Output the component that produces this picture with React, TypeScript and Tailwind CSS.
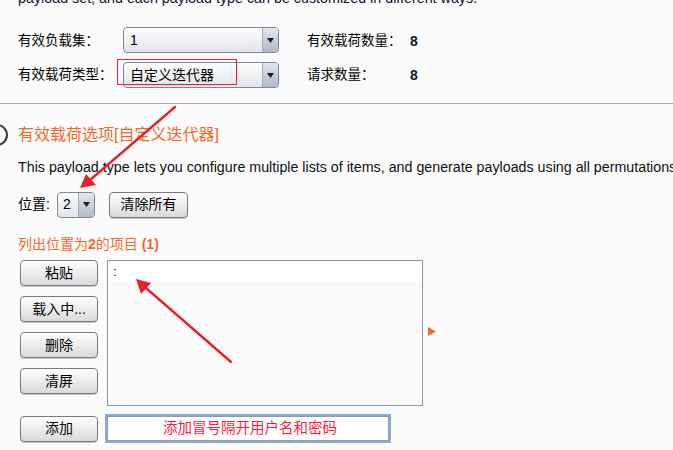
import React from "react";

const FONT = { fontFamily: '"Liberation Sans", Arial, "Noto Sans CJK SC", sans-serif' };

function Select({ value, width, narrow }: { value: string; width: string; narrow?: boolean }) {
  return (
    <div
      className={`${width} h-[26px] flex rounded-[4px] border border-[#7d8796] bg-gradient-to-b from-[#fefefe] to-[#e1e4ea] overflow-hidden`}
    >
      <div className={`flex-1 flex items-center ${narrow ? "pl-[5px]" : "pl-[6px]"} text-[14px] text-black`}>{value}</div>
      <div className="w-[16px] flex items-center justify-center border-l border-[#a3adb9] bg-gradient-to-b from-[#e3e8ee] to-[#aebbc9]">
        <svg width="7" height="5" viewBox="0 0 7 5">
          <path d="M0 0 L7 0 L3.5 5 Z" fill="#1a1a1a" />
        </svg>
      </div>
    </div>
  );
}

function Btn({ label, w = "w-[78px]" }: { label: string; w?: string }) {
  return (
    <div
      className={`${w} h-[26px] flex items-center justify-center rounded-[4px] border border-[#7b7b7b] bg-gradient-to-b from-[#ffffff] to-[#dadbdd] text-[14px] text-black shadow-[0_1px_0_#c8c8c8]`}
    >
      {label}
    </div>
  );
}

export default function App() {
  return (
    <div className="relative w-[673px] h-[450px] overflow-hidden bg-[#fbfbfb] text-[13px] text-black" style={FONT}>
      <div className="pl-[18px] -mt-[9px] h-[15px] leading-[15px] text-[14.3px] text-[#111133] whitespace-nowrap">
        payload set, and each payload type can be customized in different ways.
      </div>

      {/* rows */}
      <div className="mt-[21px] flex flex-col gap-[9px]">
        <div className="flex items-center h-[26px]">
          <div className="w-[123px] pl-[18px] text-[13.5px] pt-[2px]">有效负载集：</div>
          <Select value="1" width="w-[156px]" />
          <div className="w-[131px] pl-[28px] text-[13.5px] pt-[2px] whitespace-nowrap">有效载荷数量：</div>
          <div className="text-[14px] font-semibold text-[#111133] pt-[2px]">8</div>
        </div>
        <div className="flex items-center h-[26px]">
          <div className="w-[123px] pl-[18px] text-[13.5px] pt-[1px]">有效载荷类型：</div>
          <Select value="自定义迭代器" width="w-[156px]" />
          <div className="w-[131px] pl-[28px] text-[13.5px] pt-[1px] whitespace-nowrap">请求数量：</div>
          <div className="text-[14px] font-semibold text-[#111133] pt-[1px]">8</div>
        </div>
      </div>

      <div className="mt-[15px] h-px bg-[#a4a8b0]" />

      {/* section title */}
      <div className="mt-[20px] flex items-center h-[22px]">
        <div className="-ml-[14px] w-[22px] h-[22px] rounded-full border-2 border-[#3a3a3a]" />
        <div className="ml-[10px] text-[16px] text-[#f2692c] whitespace-nowrap">有效载荷选项[自定义迭代器]</div>
      </div>

      <div className="mt-[13px] pl-[18px] h-[16px] leading-[16px] text-[14.25px] text-[#111] whitespace-nowrap">
        This payload type lets you configure multiple lists of items, and generate payloads using all permutations
      </div>

      <div className="mt-[16px] pl-[18px] flex items-center h-[27px]">
        <div className="w-[39px] text-[14px]">位置:</div>
        <Select value="2" width="w-[38px]" narrow />
        <div className="ml-[14px]">
          <Btn label="清除所有" w="w-[79px]" />
        </div>
      </div>

      <div className="mt-[17px] pl-[18px] h-[18px] leading-[18px] text-[14px] text-[#f2692c]">
        列出位置为<span className="font-bold">2</span>的项目 <span className="font-bold">(1)</span>
      </div>

      <div className="mt-[7px] pl-[20px] flex">
        <div className="flex flex-col gap-[10px] w-[79px]">
          <Btn label="粘贴" />
          <Btn label="载入中..." />
          <Btn label="删除" />
          <Btn label="清屏" />
        </div>
        <div className="ml-[8px] w-[316px] h-[146px] border border-[#8d97a5] bg-[#fafafa]">
          <div className="h-[21px] bg-white pl-[5px] text-[13px] leading-[21px]">:</div>
        </div>
        <div className="ml-[5px] mt-[67px]">
          <svg width="8" height="9" viewBox="0 0 8 9">
            <path d="M0 0 L8 4.5 L0 9 Z" fill="#f2692c" />
          </svg>
        </div>
      </div>

      <div className="mt-[8px] pl-[20px] flex items-center">
        <Btn label="添加" />
        <div className="ml-[7px] w-[286px] h-[29px] border-2 border-[#86acd9] shadow-[inset_0_0_0_1px_#9a9a9a] bg-white flex items-center">
          <div className="pl-[56px] text-[14.5px] text-[#ff1a3a] whitespace-nowrap">添加冒号隔开用户名和密码</div>
        </div>
      </div>

      {/* red highlight rect */}
      <div className="absolute left-[117px] top-[59px] w-[120px] h-[26px] border border-[#e8202a]" />

      {/* arrows */}
      <svg className="absolute left-0 top-0" width="673" height="450" viewBox="0 0 673 450">
        <g stroke="#e8222c" strokeWidth="2.4" fill="#e8222c" strokeLinecap="round">
          <line x1="175" y1="107" x2="90" y2="180" />
          <path d="M80 188 L86 174 L96 185 Z" stroke="none" />
          <line x1="231" y1="362" x2="146" y2="288" />
          <path d="M136 279 L151 283 L141 294 Z" stroke="none" />
        </g>
      </svg>
    </div>
  );
}
